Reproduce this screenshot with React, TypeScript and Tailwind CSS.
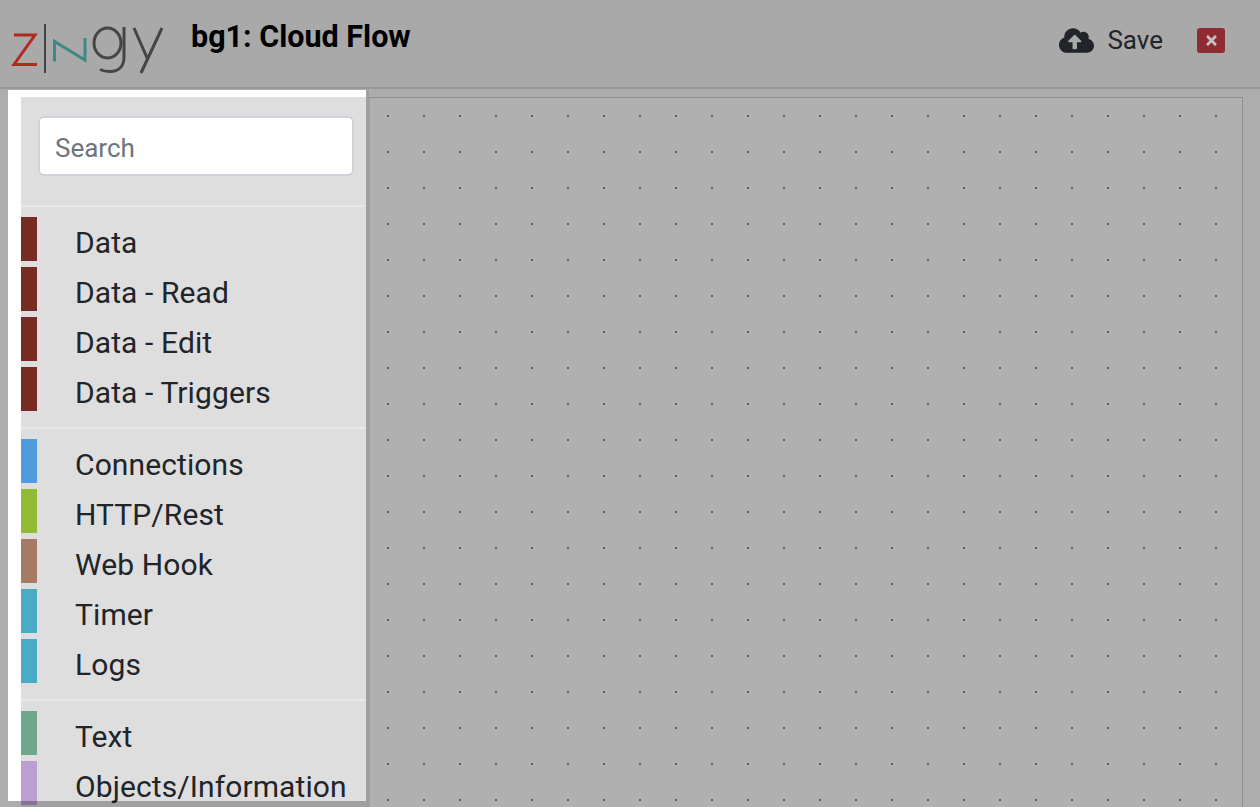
import { FaCloudUploadAlt, FaTimes } from "react-icons/fa";

type Item = { label: string; color: string };

const groups: Item[][] = [
  [
    { label: "Data", color: "bg-[#762b23]" },
    { label: "Data - Read", color: "bg-[#762b23]" },
    { label: "Data - Edit", color: "bg-[#762b23]" },
    { label: "Data - Triggers", color: "bg-[#762b23]" },
  ],
  [
    { label: "Connections", color: "bg-[#4f9bdc]" },
    { label: "HTTP/Rest", color: "bg-[#91bb35]" },
    { label: "Web Hook", color: "bg-[#a67b63]" },
    { label: "Timer", color: "bg-[#49abc5]" },
    { label: "Logs", color: "bg-[#49abc5]" },
  ],
  [
    { label: "Text", color: "bg-[#6fa78d]" },
    { label: "Objects/Information", color: "bg-[#bc9fd0]" },
  ],
];

function Logo() {
  return (
    <svg width="170" height="70" viewBox="0 0 170 70" fill="none" className="shrink-0">
      <path d="M14 26H35L14 55.500H37" stroke="#b02a1e" strokeWidth="3" />
      <path d="M45 15V64" stroke="#444" strokeWidth="2" />
      <path d="M54.500 52.500V32.500L85 51V29" stroke="#3c8a86" strokeWidth="3" />
      <ellipse cx="107.500" cy="34" rx="13.500" ry="15" stroke="#454545" strokeWidth="3" />
      <path d="M124 18V48C124 58 118 62.500 110 62.500C106 62.500 103 62 100 60.500" stroke="#454545" strokeWidth="3" />
      <path d="M134 19L148 51M162 19L141 64" stroke="#454545" strokeWidth="3" />
    </svg>
  );
}

function Dots() {
  return (
    <svg className="absolute inset-0 h-full w-full">
      <defs>
        <pattern id="dots" x="0" y="0" width="36" height="36" patternUnits="userSpaceOnUse">
          <rect x="17" y="17" width="2" height="2" fill="#5f5f5f" />
        </pattern>
      </defs>
      <rect width="100%" height="100%" fill="url(#dots)" />
    </svg>
  );
}

export default function App() {
  return (
    <div className="relative h-[807px] w-[1260px] overflow-hidden bg-[#adadad] font-['Roboto',sans-serif] text-[#212529]">
      <header className="flex h-[89px] items-center border-b-2 border-[#979797] bg-[#a9a9a9]">
        <Logo />
        <h1 className="ml-[21px] pb-[13px] text-[30.500px] font-bold text-black">bg1: Cloud Flow</h1>
        <div className="ml-auto flex items-center pb-[6px]">
          <FaCloudUploadAlt size={35} className="text-[#212529]" />
          <span className="ml-[13px] text-[26px]">Save</span>
          <button className="ml-[34px] mr-[35px] flex h-[25px] w-[28px] items-center justify-center rounded-[3px] bg-[#8e2b33]">
            <FaTimes size={15} className="text-[#c9c0c0]" />
          </button>
        </div>
      </header>

      <div className="mt-px flex h-[717px]">
        <aside className="relative ml-[8px] w-[358px] shrink-0 border-l-[13px] border-t-[7px] border-white bg-[#dedede]">
          <div className="h-[110px] border-b-2 border-[#e8e8e8] pl-[17px] pt-[19px]">
            <input
              placeholder="Search"
              className="h-[60px] w-[316px] rounded-[6px] border-2 border-[#ced4da] bg-white px-[15px] pt-[4px] text-[26px] outline-none placeholder:text-[#6c757d]"
            />
          </div>
          {groups.map((group, i) => (
            <div key={i} className={i < 2 ? "border-b-2 border-[#e8e8e8] pb-[10px] pt-[10px]" : "pt-[10px]"}>
              {group.map((item) => (
                <div key={item.label} className="mb-[6px] flex h-[44px] items-center">
                  <div className={`h-full w-[16px] shrink-0 ${item.color}`} />
                  <span className="ml-[38px] whitespace-nowrap pt-[8px] text-[30px] leading-[44px] tracking-[0.1px]">{item.label}</span>
                </div>
              ))}
            </div>
          ))}
        </aside>
        <div className="w-[3px] bg-[#9f9f9f]" />
        <main className="flex-1 pr-[17px] pt-[7px]">
          <div className="relative h-[800px] border border-[#8f8f8f] border-l-[#9f9f9f] bg-[#b0b0b0]">
            <Dots />
          </div>
        </main>
      </div>

      <div className="absolute left-0 top-[801px] h-[6px] w-[21px] bg-[#adadad]" />
      <div className="absolute left-[21px] top-[801px] h-[6px] w-[345px] bg-black/28" />
    </div>
  );
}
